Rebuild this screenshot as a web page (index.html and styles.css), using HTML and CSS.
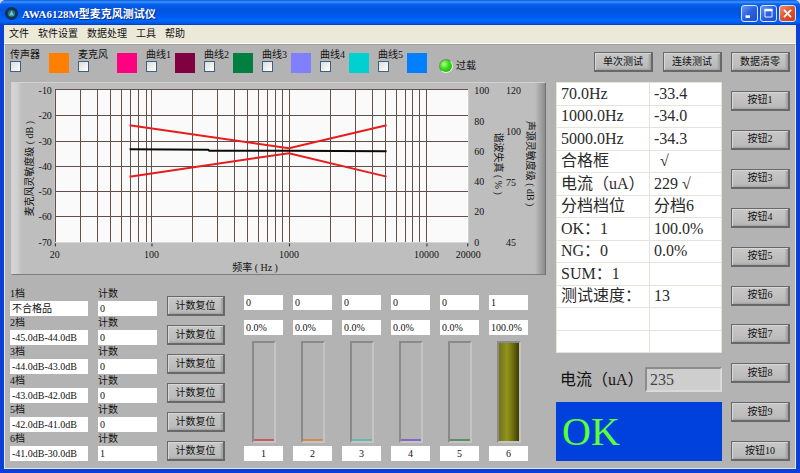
FILE: index.html
```html
<!DOCTYPE html>
<html lang="zh-CN">

<head>
  <meta charset="UTF-8">
  <title>AWA6128M型麦克风测试仪</title>
  <link rel="stylesheet" href="styles.css">
</head>

<body>
  <div class="window">
    <header class="titlebar">
      <svg class="app-icon" viewBox="0 0 13 13">
        <circle cx="6.5" cy="6.5" r="6" fill="#1d3442" stroke="#0b2c66" />
        <circle cx="6.5" cy="6.5" r="3.6" fill="#1c7790" />
        <path d="M4 8.5L6.5 3.5L9 8.5Z" fill="#6cc5d8" />
      </svg>
      <h1>AWA6128M型麦克风测试仪</h1>
      <div class="window-buttons">
        <button type="button" aria-label="最小化"><svg viewBox="0 0 17 17"><path d="M4 12h5" stroke="#fff" stroke-width="3" /></svg></button>
        <button type="button" aria-label="最大化"><svg viewBox="0 0 17 17"><path d="M4 4.5h9" stroke="#fff" stroke-width="3" /><path d="M4.5 4v8.5h8V4" fill="none" stroke="#fff" /></svg></button>
        <button type="button" class="close" aria-label="关闭"><svg viewBox="0 0 17 17"><path d="M4.5 4.5l8 8M12.5 4.5l-8 8" stroke="#fff" stroke-width="2" /></svg></button>
      </div>
    </header>

    <nav class="menu">
      <a href="#">文件</a>
      <a href="#">软件设置</a>
      <a href="#">数据处理</a>
      <a href="#">工具</a>
      <a href="#">帮助</a>
    </nav>

    <main class="workspace">
      <div class="left">
        <div class="legend">
          <div class="legend-item wide"><label>传声器<input type="checkbox"></label><span class="swatch orange"></span></div>
          <div class="legend-item wide"><label>麦克风<input type="checkbox"></label><span class="swatch pink"></span></div>
          <div class="legend-item"><label>曲线1<input type="checkbox"></label><span class="swatch maroon"></span></div>
          <div class="legend-item"><label>曲线2<input type="checkbox"></label><span class="swatch green"></span></div>
          <div class="legend-item"><label>曲线3<input type="checkbox"></label><span class="swatch violet"></span></div>
          <div class="legend-item"><label>曲线4<input type="checkbox"></label><span class="swatch cyan"></span></div>
          <div class="legend-item"><label>曲线5<input type="checkbox"></label><span class="swatch blue"></span></div>
          <div class="overload"><span class="led"></span>过载</div>
        </div>

        <div class="chart-panel">
          <svg class="chart" viewBox="0 0 535 194">
            <rect x="43" y="7" width="415" height="154" fill="#fafafa" />
            <!-- log frequency grid -->
            <path class="grid" d="M43.5 7V161M68.5 7V161M85.5 7V161M98.5 7V161M109.5 7V161M118.5 7V161M126.5 7V161M134.5 7V161M140.5 7V161
              M181.5 7V161M206.5 7V161M223.5 7V161M236.5 7V161M247.5 7V161M256.5 7V161M264.5 7V161M271.5 7V161M278.5 7V161
              M319.5 7V161M344.5 7V161M361.5 7V161M374.5 7V161M385.5 7V161M394.5 7V161M402.5 7V161M409.5 7V161M416.5 7V161" />
            <path class="grid" d="M43 7.5H458M43 33.5H458M43 59.5H458M43 84.5H458M43 109.5H458M43 135.5H458" />
            <path class="tick" d="M43.5 162V165M140.5 162V165M278.5 162V165M416.5 162V165M457.5 162V165" />

            <polyline class="limit" points="118,43.5 278,66.5 376,43.5" />
            <polyline class="limit" points="118,95 278,71.5 376,95" />
            <polyline class="response" points="118,67.5 197,68 198,69 278,69 376,69.5" />

            <g class="end">
              <text x="40" y="12">-10</text>
              <text x="40" y="37">-20</text>
              <text x="40" y="63">-30</text>
              <text x="40" y="88">-40</text>
              <text x="40" y="113">-50</text>
              <text x="40" y="139">-60</text>
              <text x="40" y="165">-70</text>
            </g>
            <g class="mid">
              <text x="43" y="177">20</text>
              <text x="140" y="177">100</text>
              <text x="278" y="177">1000</text>
              <text x="416" y="177">10000</text>
              <text x="458" y="177">20000</text>
              <text x="244" y="190">频率 ( Hz )</text>
              <text transform="translate(21 87) rotate(-90)">麦克风灵敏度级 ( dB )</text>
              <text transform="translate(485 82) rotate(90)">谐波失真 ( % )</text>
              <text transform="translate(517 82) rotate(90)">声源灵敏度级 ( dB )</text>
            </g>
            <g>
              <text x="464" y="12">100</text>
              <text x="464" y="43">80</text>
              <text x="464" y="73">60</text>
              <text x="464" y="103">40</text>
              <text x="464" y="134">20</text>
              <text x="464" y="165">0</text>
              <text x="496" y="12">120</text>
              <text x="496" y="53">100</text>
              <text x="496" y="104">75</text>
              <text x="496" y="165">45</text>
            </g>
          </svg>
        </div>

        <div class="bottom">
          <div class="levels">
            <div class="level"><label>1档<input type="text" value="不合格品"></label><label>计数<input type="text" value="0"></label><button type="button">计数复位</button></div>
            <div class="level"><label>2档<input type="text" value="-45.0dB-44.0dB"></label><label>计数<input type="text" value="0"></label><button type="button">计数复位</button></div>
            <div class="level"><label>3档<input type="text" value="-44.0dB-43.0dB"></label><label>计数<input type="text" value="0"></label><button type="button">计数复位</button></div>
            <div class="level"><label>4档<input type="text" value="-43.0dB-42.0dB"></label><label>计数<input type="text" value="0"></label><button type="button">计数复位</button></div>
            <div class="level"><label>5档<input type="text" value="-42.0dB-41.0dB"></label><label>计数<input type="text" value="0"></label><button type="button">计数复位</button></div>
            <div class="level"><label>6档<input type="text" value="-41.0dB-30.0dB"></label><label>计数<input type="text" value="1"></label><button type="button">计数复位</button></div>
          </div>

          <div class="bars">
            <div class="bar-col">
              <input type="text" value="0" aria-label="1档数量">
              <input type="text" value="0.0%" aria-label="1档比例">
              <div class="bar"><div class="fill red" style="height: 2%"></div></div>
              <input type="text" class="name" value="1" aria-label="1档名称">
            </div>
            <div class="bar-col">
              <input type="text" value="0" aria-label="2档数量">
              <input type="text" value="0.0%" aria-label="2档比例">
              <div class="bar"><div class="fill amber" style="height: 2%"></div></div>
              <input type="text" class="name" value="2" aria-label="2档名称">
            </div>
            <div class="bar-col">
              <input type="text" value="0" aria-label="3档数量">
              <input type="text" value="0.0%" aria-label="3档比例">
              <div class="bar"><div class="fill teal" style="height: 2%"></div></div>
              <input type="text" class="name" value="3" aria-label="3档名称">
            </div>
            <div class="bar-col">
              <input type="text" value="0" aria-label="4档数量">
              <input type="text" value="0.0%" aria-label="4档比例">
              <div class="bar"><div class="fill purple" style="height: 2%"></div></div>
              <input type="text" class="name" value="4" aria-label="4档名称">
            </div>
            <div class="bar-col">
              <input type="text" value="0" aria-label="5档数量">
              <input type="text" value="0.0%" aria-label="5档比例">
              <div class="bar"><div class="fill moss" style="height: 2%"></div></div>
              <input type="text" class="name" value="5" aria-label="5档名称">
            </div>
            <div class="bar-col">
              <input type="text" value="1" aria-label="6档数量">
              <input type="text" value="100.0%" aria-label="6档比例">
              <div class="bar"><div class="fill olive" style="height: 100%"></div></div>
              <input type="text" class="name" value="6" aria-label="6档名称">
            </div>
          </div>
        </div>
      </div>

      <div class="middle">
        <div class="test-buttons">
          <button type="button">单次测试</button>
          <button type="button">连续测试</button>
        </div>

        <table class="results">
          <tr><td>70.0Hz</td><td>-33.4</td></tr>
          <tr><td>1000.0Hz</td><td>-34.0</td></tr>
          <tr><td>5000.0Hz</td><td>-34.3</td></tr>
          <tr><td>合格框</td><td class="indent">√</td></tr>
          <tr><td>电流（uA）</td><td>229 √</td></tr>
          <tr><td>分档档位</td><td>分档6</td></tr>
          <tr><td>OK：1</td><td>100.0%</td></tr>
          <tr><td>NG：0</td><td>0.0%</td></tr>
          <tr><td>SUM：1</td><td></td></tr>
          <tr><td>测试速度：</td><td>13</td></tr>
          <tr><td></td><td></td></tr>
          <tr><td></td><td></td></tr>
        </table>

        <div class="current">
          <label for="current">电流（uA）</label>
          <input type="text" id="current" value="235" readonly>
        </div>

        <div class="verdict">OK</div>
      </div>

      <div class="side">
        <button type="button">数据清零</button>
        <button type="button">按钮1</button>
        <button type="button">按钮2</button>
        <button type="button">按钮3</button>
        <button type="button">按钮4</button>
        <button type="button">按钮5</button>
        <button type="button">按钮6</button>
        <button type="button">按钮7</button>
        <button type="button">按钮8</button>
        <button type="button">按钮9</button>
        <button type="button">按钮10</button>
      </div>
    </main>
  </div>
</body>

</html>
```
FILE: styles.css
```css
* {
  box-sizing: border-box;
}

body {
  margin: 0;
  background: #c5d6f0;
  color: #111;
  font-family: "Liberation Serif", "Noto Sans CJK SC", serif;
  font-size: 10px;
  line-height: 12px;
}

button,
input {
  margin: 0;
  font: inherit;
  color: inherit;
}

.window {
  display: flex;
  flex-direction: column;
  min-height: 100vh;
  background: #0a3fd8;
  border-radius: 6px 6px 0 0;
  overflow: hidden;
}

.titlebar {
  display: flex;
  align-items: center;
  height: 25px;
  padding: 2px 4px 0 5px;
  background: linear-gradient(#0a5ae0 0, #3d95ff 2px, #0a62ec 4px, #0054e0 9px, #0058ea 15px, #0066ff 21px, #0050d8 24px, #0038b0 25px);
}

.app-icon {
  width: 13px;
  height: 13px;
}

.titlebar h1 {
  flex: 1;
  margin: 0 0 0 4px;
  color: #fff;
  font-size: 11px;
  line-height: 16px;
  text-shadow: 1px 1px #0a2a80;
}

.window-buttons {
  display: flex;
  gap: 2px;
}

.window-buttons button {
  width: 17px;
  height: 17px;
  padding: 0;
  border: 1px solid #d8e4fb;
  border-radius: 3px;
  background: linear-gradient(135deg, #6b96f2, #2a60e0 50%, #1c4fce);
}

.window-buttons .close {
  background: linear-gradient(135deg, #f0906c, #e0522c 50%, #c8401c);
}

.window-buttons svg {
  display: block;
  width: 15px;
  height: 15px;
}

.menu {
  display: flex;
  gap: 9px;
  height: 19px;
  margin: 0 4px;
  padding: 0 5px;
  border-bottom: 1px solid #fff;
  background: #ece9d8;
  line-height: 18px;
}

.menu a {
  color: #111;
  text-decoration: none;
}

.workspace {
  flex: 1;
  display: flex;
  margin: 0 4px 4px;
  padding: 4px 5px 7px;
  border: 1px solid #e6e6e6;
  border-top-color: #a0a0a0;
  background: #b3b3b3;
}

.left {
  flex: 1;
  min-width: 0;
}

/* gray bevelled buttons */
.workspace button {
  width: 59px;
  height: 20px;
  padding: 0;
  border: 1px solid #686868;
  border-width: 1px 2px 2px 1px;
  background: linear-gradient(#c8c8c8, #b8b8b8);
  box-shadow: inset 1px 1px #d8d8d8, inset -2px -1px 2px #a0a0a0;
  line-height: 16px;
  white-space: nowrap;
}

.legend {
  display: flex;
  height: 33px;
}

.legend-item {
  display: flex;
  width: 58px;
}

.legend-item label {
  width: 29px;
  white-space: nowrap;
}

.legend-item.wide {
  width: 68px;
}

.legend-item.wide label {
  width: 39px;
}

.legend-item input {
  display: block;
  appearance: none;
  width: 11px;
  height: 11px;
  border: 1px solid #3c5f82;
  background: linear-gradient(135deg, #dcdcd8, #fff);
}

.swatch {
  width: 20px;
  height: 20px;
  margin-top: 4px;
}

.orange { background: #ff8000; }
.pink { background: #ff0080; }
.maroon { background: #800040; }
.green { background: #008040; }
.violet { background: #8080ff; }
.cyan { background: #00d0d0; }
.blue { background: #0080ff; }

.overload {
  display: flex;
  align-items: center;
  gap: 3px;
  padding-left: 3px;
}

.led {
  width: 14px;
  height: 14px;
  border: 1px solid #6f8f6a;
  border-right-color: #e6f0e0;
  border-bottom-color: #e6f0e0;
  border-radius: 50%;
  background: radial-gradient(circle at 35% 35%, #b6ff90, #30dc10 45%, #18a808);
}

.chart-panel {
  margin-left: 1px;
  border: 1px solid #d2d2d2;
  border-right-color: #707070;
  border-bottom-color: #7c7c7c;
  background: linear-gradient(90deg, #d6d6d6, #d0d0d0 5px, #bebebe 10px, #bebebe calc(100% - 10px), #8c8c8c);
}

.chart {
  display: block;
  width: 100%;
  margin: -1px 0;
}

.chart text {
  fill: #111;
}

.chart .end {
  text-anchor: end;
}

.chart .mid {
  text-anchor: middle;
}

.grid {
  fill: none;
  stroke: #625048;
  shape-rendering: crispEdges;
}

.tick {
  stroke: #222;
}

.limit {
  fill: none;
  stroke: #e81c1c;
  stroke-width: 2;
}

.response {
  fill: none;
  stroke: #0a0a0a;
  stroke-width: 2;
}

.bottom {
  display: flex;
  gap: 19px;
  padding-top: 12px;
}

.level {
  display: grid;
  grid-template-columns: 78px 59px 58px;
  column-gap: 10px;
  align-items: end;
  height: 29px;
}

.level label {
  line-height: 14px;
}

.workspace .level button {
  width: 58px;
}

.level input,
.bars input {
  display: block;
  width: 100%;
  height: 15px;
  padding: 0 2px;
  border: 0;
  background: #fff;
  line-height: 15px;
}

.bars {
  display: flex;
  gap: 10px;
  padding-top: 8px;
}

.bar-col {
  display: flex;
  flex-direction: column;
  align-items: center;
  width: 39px;
}

.bar-col input + input {
  margin-top: 10px;
}

.bars .name {
  text-align: center;
}

.bar {
  display: flex;
  align-items: flex-end;
  width: 24px;
  height: 102px;
  margin: 6px 0 3px;
  border: 2px solid #8a8a8a;
  border-right-color: #c4c4c4;
  border-bottom-color: #c4c4c4;
}

.fill {
  width: 100%;
}

.red { background: #c45c64; }
.amber { background: #d08c50; }
.teal { background: #68b8a8; }
.purple { background: #8468c4; }
.moss { background: #5c8c68; }
.olive { background: linear-gradient(90deg, #74741c, #92921e 40%, #7c7c10 60%, #3c3c04); }

.middle {
  width: 166px;
  margin-left: 10px;
  padding-top: 3px;
}

.test-buttons {
  display: flex;
  justify-content: flex-end;
  gap: 10px;
  margin-bottom: 10px;
}

.results {
  width: 100%;
  height: 271px;
  border: 1px solid #a0b4c4;
  border-collapse: collapse;
  background: #fff;
  color: #2a2a2a;
  font-size: 16px;
  line-height: 20px;
}

.results td {
  height: 22px;
  padding: 0 4px;
  border: 1px solid #e6e4da;
  white-space: nowrap;
}

.results td:first-child {
  width: 93px;
}

.results .indent {
  padding-left: 10px;
}

.current {
  display: flex;
  align-items: center;
  justify-content: space-between;
  margin: 14px 0 10px;
  padding-left: 4px;
  font-size: 16px;
  line-height: 24px;
}

.current input {
  width: 77px;
  height: 25px;
  padding: 0 3px;
  border: 2px solid #8c8c8c;
  border-right-color: #dadada;
  border-bottom-color: #dadada;
  background: #cecece;
  color: #444;
}

.verdict {
  height: 59px;
  padding: 0 6px;
  background: #0040dc;
  color: #5cff38;
  font-size: 40px;
  line-height: 59px;
}

.side {
  display: flex;
  flex-direction: column;
  justify-content: space-between;
  margin-left: 9px;
  padding-top: 3px;
}
```
